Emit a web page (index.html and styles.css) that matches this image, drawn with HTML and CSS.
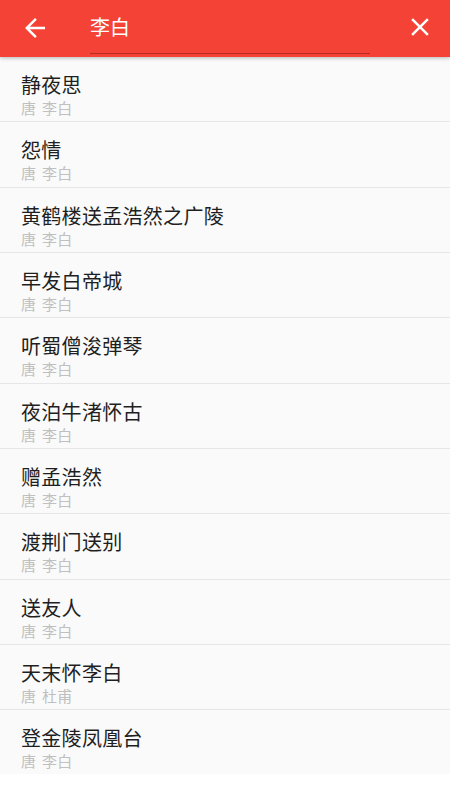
FILE: index.html
```html
<!DOCTYPE html>
<html lang="zh-CN">
<head>
<meta charset="utf-8">
<title>搜索 李白</title>
<link rel="stylesheet" href="styles.css">
</head>
<body>
<div class="app">
  <header class="toolbar">
    <button class="icon-btn back" aria-label="返回">
      <svg viewBox="0 0 24 24" width="30" height="30"><path fill="#fff" d="M20 11H7.83l5.59-5.59L12 4l-8 8 8 8 1.41-1.41L7.83 13H20v-2z"/></svg>
    </button>
    <div class="search">
      <span class="query">李白</span>
    </div>
    <button class="icon-btn close" aria-label="清除">
      <svg viewBox="0 0 24 24" width="30" height="30"><path fill="#fff" d="M19 6.41L17.59 5 12 10.59 6.41 5 5 6.41 10.59 12 5 17.590 6.41 19 12 13.41 17.59 19 19 17.59 13.41 12z"/></svg>
    </button>
  </header>
  <ul class="list">
    <li class="item"><div class="title">静夜思</div><div class="sub">唐 李白</div></li>
    <li class="item"><div class="title">怨情</div><div class="sub">唐 李白</div></li>
    <li class="item"><div class="title">黄鹤楼送孟浩然之广陵</div><div class="sub">唐 李白</div></li>
    <li class="item"><div class="title">早发白帝城</div><div class="sub">唐 李白</div></li>
    <li class="item"><div class="title">听蜀僧浚弹琴</div><div class="sub">唐 李白</div></li>
    <li class="item"><div class="title">夜泊牛渚怀古</div><div class="sub">唐 李白</div></li>
    <li class="item"><div class="title">赠孟浩然</div><div class="sub">唐 李白</div></li>
    <li class="item"><div class="title">渡荆门送别</div><div class="sub">唐 李白</div></li>
    <li class="item"><div class="title">送友人</div><div class="sub">唐 李白</div></li>
    <li class="item"><div class="title">天末怀李白</div><div class="sub">唐 杜甫</div></li>
    <li class="item"><div class="title">登金陵凤凰台</div><div class="sub">唐 李白</div></li>
  </ul>
</div>
</body>
</html>
```
FILE: styles.css
```css
* { box-sizing: border-box; }
html, body {
  margin: 0;
  padding: 0;
  background: #ffffff;
  font-family: "Noto Sans CJK SC", "Noto Sans", sans-serif;
}
.app {
  width: 450px;
  height: 774px;
  background: #fafafa;
  overflow: hidden;
  position: relative;
}
.toolbar {
  height: 57px;
  background: #f44336;
  display: flex;
  align-items: center;
  position: relative;
  z-index: 2;
  box-shadow: 0 1px 4px rgba(0, 0, 0, 0.28);
}
.icon-btn {
  border: 0;
  background: none;
  padding: 0;
  width: 30px;
  height: 30px;
  display: flex;
  align-items: center;
  justify-content: center;
  flex: none;
}
.icon-btn svg { display: block; }
.back { margin-left: 20px; margin-top: -1px; }
.close { margin-left: 35px; margin-top: -4px; }
.search {
  width: 280px;
  margin-left: 40px;
  height: 54px;
  align-self: flex-start;
  border-bottom: 1.5px solid #b8291f;
  display: flex;
  align-items: center;
}
.query {
  color: #ffffff;
  font-size: 20px;
  line-height: 24px;
  margin-top: 1px;
}
.list {
  list-style: none;
  margin: 0;
  padding: 0;
}
.item {
  height: 65.33px;
  border-bottom: 1px solid #e6e6e6;
  padding: 16px 0 0 21px;
}
.title {
  color: #1f1f1f;
  font-size: 20px;
  line-height: 24px;
  letter-spacing: 0.3px;
}
.sub {
  color: #c0c0c0;
  font-size: 15px;
  line-height: 18px;
  margin-top: 2px;
  letter-spacing: 0.3px;
  word-spacing: 2px;
}
```
